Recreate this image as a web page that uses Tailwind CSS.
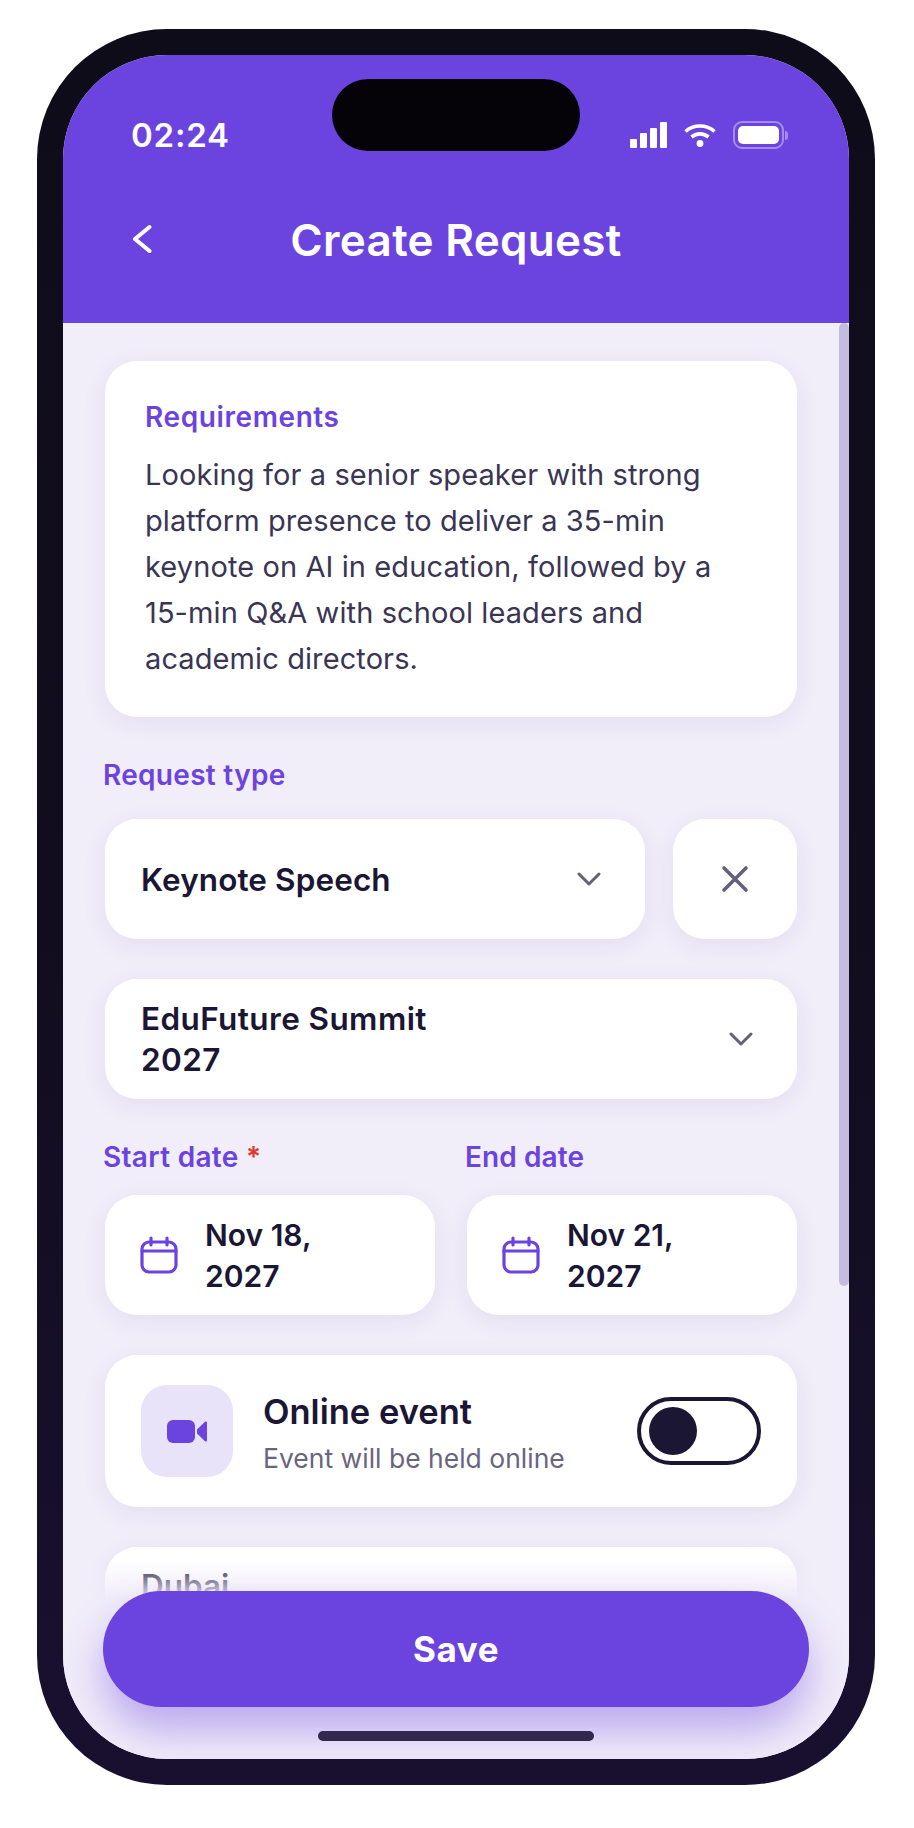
<!DOCTYPE html>
<html lang="en">
<head>
  <meta charset="UTF-8" />
  <meta name="viewport" content="width=device-width, initial-scale=1.0" />
  <script src="https://cdn.jsdelivr.net/npm/@tailwindcss/browser@4"></script>
  <title>Create Request</title>
</head>
<body class="bg-white font-['Inter',sans-serif]">

  <!-- Phone frame -->
  <div class="ml-[37px] mt-[29px] w-[838px] h-[1756px] p-[26px] rounded-[130px] bg-gradient-to-b from-[#0f0c1a] via-[#110d1e] to-[#191030]">
    <div class="relative w-[786px] h-[1704px] rounded-[104px] overflow-hidden bg-[#f1edf9] flex flex-col">

      <!-- Header -->
      <header class="h-[268px] shrink-0 bg-[#6b43df] text-white pt-[60px]">
        <div class="h-[40px] pl-[68px] pr-[61px] flex items-center justify-between">
          <span class="text-[33px] leading-[40px] font-semibold tracking-[0.8px]">02:24</span>
          <div class="flex items-center gap-[17px]">
            <svg width="37" height="26" viewBox="0 0 37 26" fill="#fff">
              <rect x="0" y="17" width="7" height="9" rx="1" />
              <rect x="10" y="11" width="7" height="15" rx="1" />
              <rect x="20" y="6" width="7" height="20" rx="1" />
              <rect x="30" y="0" width="7" height="26" rx="1" />
            </svg>
            <svg width="32" height="24" viewBox="0 0 32 24" fill="none" stroke="#fff" stroke-width="3.6" stroke-linecap="butt">
              <path d="M1.5 8.5C9.5 1.2 22.5 1.2 30.500 8.5" />
              <path d="M7.500 14C12.500 9.800 19.500 9.800 24.500 14" />
              <circle cx="16" cy="20.500" r="3.400" fill="#fff" stroke="none" />
            </svg>
            <div class="flex items-center gap-[1px]">
              <div class="w-[51px] h-[28px] p-[3px] rounded-[9px] border-[2px] border-[#a68cf0]">
                <div class="w-full h-full rounded-[5px] bg-white"></div>
              </div>
              <div class="w-[3px] h-[9px] rounded-r-[3px] bg-[#a68cf0]"></div>
            </div>
          </div>
        </div>

        <div class="mt-[54px] h-[60px] pl-[69px] grid grid-cols-[1fr_auto_1fr] items-center pr-[69px]">
          <svg width="20" height="30" viewBox="0 0 20 30" fill="none" stroke="#fff" stroke-width="4" stroke-linecap="round" stroke-linejoin="round">
            <path d="M17.500 3L3 15L17.500 27" />
          </svg>
          <h1 class="h-[60px] text-[44px] leading-[62px] font-semibold tracking-[0.3px]">Create Request</h1>
          <span></span>
        </div>
      </header>

      <!-- Dynamic island -->
      <div class="absolute left-[269px] top-[24px] w-[248px] h-[72px] rounded-[36px] bg-[#050308]"></div>

      <!-- Form -->
      <main class="flex-1 overflow-hidden pt-[38px] pl-[42px] pr-[52px]">

        <section class="h-[356px] rounded-[32px] bg-white pt-[39px] pl-[40px] shadow-[0_6px_26px_rgba(70,45,140,0.07)]">
          <h2 class="text-[28px] leading-[34px] font-semibold tracking-[0.6px] text-[#6b43df]">Requirements</h2>
          <p class="mt-[18px] w-[590px] text-[29px] leading-[46px] tracking-[0.1px] text-[#3a3553]">Looking for a senior speaker with strong platform presence to deliver a 35-min keynote on AI in education, followed by a 15-min Q&amp;A with school leaders and academic directors.</p>
        </section>

        <label class="block -ml-[2px] mt-[42px] mb-[28px] text-[28px] leading-[32px] font-semibold tracking-[0.3px] text-[#6b43df]">Request type</label>

        <div class="flex gap-[28px]">
          <div class="flex-1 h-[120px] rounded-[32px] bg-white pl-[36px] pr-[44px] flex items-center justify-between shadow-[0_6px_26px_rgba(70,45,140,0.07)]">
            <span class="text-[31.500px] leading-[41px] font-semibold tracking-[0.1px] text-[#1a1633]">Keynote Speech</span>
            <svg width="24" height="14" viewBox="0 0 24 14" fill="none" stroke="#65607a" stroke-width="3" stroke-linecap="round" stroke-linejoin="round"><path d="M2 2L12 12L22 2" /></svg>
          </div>
          <div class="w-[124px] h-[120px] rounded-[32px] bg-white flex items-center justify-center shadow-[0_6px_26px_rgba(70,45,140,0.07)]">
            <svg width="28" height="28" viewBox="0 0 28 28" fill="none" stroke="#65607a" stroke-width="3.600" stroke-linecap="round"><path d="M3 3L25 25M25 3L3 25" /></svg>
          </div>
        </div>

        <div class="mt-[40px] h-[120px] rounded-[32px] bg-white pl-[36px] pr-[44px] flex items-center justify-between shadow-[0_6px_26px_rgba(70,45,140,0.07)]">
          <span class="w-[320px] text-[31.500px] leading-[41px] font-semibold tracking-[0.4px] text-[#1a1633]">EduFuture Summit 2027</span>
          <svg width="24" height="14" viewBox="0 0 24 14" fill="none" stroke="#65607a" stroke-width="3" stroke-linecap="round" stroke-linejoin="round"><path d="M2 2L12 12L22 2" /></svg>
        </div>

        <!-- Dates -->
        <div class="mt-[42px] grid grid-cols-2 gap-x-[32px]">
          <div>
            <label class="block -ml-[2px] mb-[22px] text-[28px] leading-[32px] font-semibold tracking-[0.3px] text-[#6b43df]">Start date <span class="text-[#e0392f]">*</span></label>
            <div class="h-[120px] rounded-[32px] bg-white pl-[35px] flex items-center gap-[27px] shadow-[0_6px_26px_rgba(70,45,140,0.07)]">
              <svg width="38" height="38" viewBox="0 0 38 38" fill="none" stroke="#6b43df" stroke-width="3.200" stroke-linecap="round" stroke-linejoin="round">
                <rect x="2" y="6" width="34" height="30" rx="7" />
                <path d="M2 15H36M11 2V9M27 2V9" />
              </svg>
              <span class="w-[140px] pt-[2px] text-[30px] leading-[41px] font-semibold text-[#1a1633]">Nov 18, 2027</span>
            </div>
          </div>
          <div>
            <label class="block -ml-[2px] mb-[22px] text-[28px] leading-[32px] font-semibold tracking-[0.1px] text-[#6b43df]">End date</label>
            <div class="h-[120px] rounded-[32px] bg-white pl-[35px] flex items-center gap-[27px] shadow-[0_6px_26px_rgba(70,45,140,0.07)]">
              <svg width="38" height="38" viewBox="0 0 38 38" fill="none" stroke="#6b43df" stroke-width="3.200" stroke-linecap="round" stroke-linejoin="round">
                <rect x="2" y="6" width="34" height="30" rx="7" />
                <path d="M2 15H36M11 2V9M27 2V9" />
              </svg>
              <span class="w-[140px] pt-[2px] text-[30px] leading-[41px] font-semibold text-[#1a1633]">Nov 21, 2027</span>
            </div>
          </div>
        </div>

        <!-- Online toggle -->
        <div class="mt-[40px] h-[152px] rounded-[32px] bg-white pl-[36px] pr-[36px] flex items-center shadow-[0_6px_26px_rgba(70,45,140,0.07)]">
          <div class="w-[92px] h-[92px] rounded-[26px] bg-[#e9e3fa] flex items-center justify-center">
            <svg width="40" height="23" viewBox="0 0 40 23" fill="#6b43df">
              <rect x="0" y="0" width="28" height="23" rx="6" />
              <path d="M30 9.500L38 1.800C38.800 1 40 1.600 40 2.700V20.300C40 21.400 38.800 22 38 21.200L30 13.500Z" />
            </svg>
          </div>
          <div class="ml-[30px] pt-[4px] flex-1">
            <div class="text-[34.500px] leading-[42px] font-semibold text-[#1a1633]">Online event</div>
            <div class="mt-[8px] text-[26.500px] leading-[34px] text-[#6a657f]">Event will be held online</div>
          </div>
          <div class="w-[124px] h-[68px] rounded-full border-[4px] border-[#1a1633] bg-white pl-[8px] flex items-center">
            <div class="w-[48px] h-[48px] rounded-full bg-[#1a1633]"></div>
          </div>
        </div>

        <div class="mt-[40px] h-[120px] rounded-[32px] bg-white pl-[36px] pt-[18px] shadow-[0_6px_26px_rgba(70,45,140,0.07)]">
          <span class="text-[31.500px] leading-[41px] font-semibold text-[#1a1633]">Dubai</span>
        </div>
      </main>

      <!-- Scrollbar -->
      <div class="absolute right-0 top-[268px] w-[10px] h-[963px] rounded-[5px] bg-[#c5bcdf]"></div>

      <!-- Bottom fade, save button, home bar -->
      <div class="absolute left-0 right-0 bottom-0 h-[199px] bg-gradient-to-b from-[#f1edf9]/0 to-[#f1edf9] to-[20%]"></div>
      <button class="absolute left-[40px] top-[1536px] w-[706px] h-[116px] rounded-full bg-[#6b43df] text-white text-[35px] font-bold tracking-[0.6px] shadow-[0_24px_40px_rgba(107,67,223,0.4)]">Save</button>
      <div class="absolute left-[255px] top-[1676px] w-[276px] h-[10px] rounded-full bg-[#32284d]"></div>
    </div>
  </div>

</body>
</html>
